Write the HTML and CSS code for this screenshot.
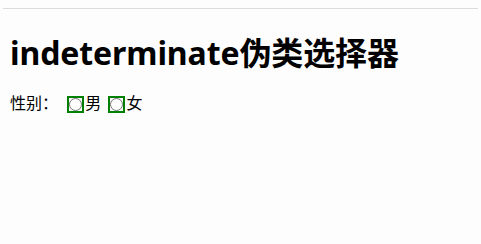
FILE: index.html
```html
<!DOCTYPE html>
<html>
<head>
<meta charset="utf-8">
<link rel="stylesheet" href="styles.css">
</head>
<body>
<div class="topline"></div>
<div class="page">
  <h1 class="title">indeterminate伪类选择器</h1>
  <div class="row">
    <span class="label">性别：</span>
    <input type="radio" name="sex" id="m" class="radio"><label for="m">男</label>
    <input type="radio" name="sex" id="f" class="radio"><label for="f">女</label>
  </div>
</div>
</body>
</html>
```
FILE: styles.css
```css
html, body {
  margin: 0;
  background: #fdfdfd;
}
body {
  font-family: "Noto Sans", "Noto Sans CJK SC", sans-serif;
  color: #000;
}
.topline {
  margin: 8px 3px 0 3px;
  border-top: 1px solid #dcdcdc;
}
.page {
  padding: 0 10px;
}
.title {
  font-size: 32px;
  font-weight: bold;
  margin: 22px 0 0 0;
  line-height: 44px;
  letter-spacing: -0.1px;
}
.row {
  margin-top: 17px;
  font-size: 16px;
  line-height: 22px;
}
.label {
  margin-right: 2px;
}
.radio {
  margin: 3px 3px 0 5px;
  width: 13px;
  height: 13px;
  vertical-align: -2px;
}
.radio:indeterminate {
  outline: 2px solid green;
}
```
